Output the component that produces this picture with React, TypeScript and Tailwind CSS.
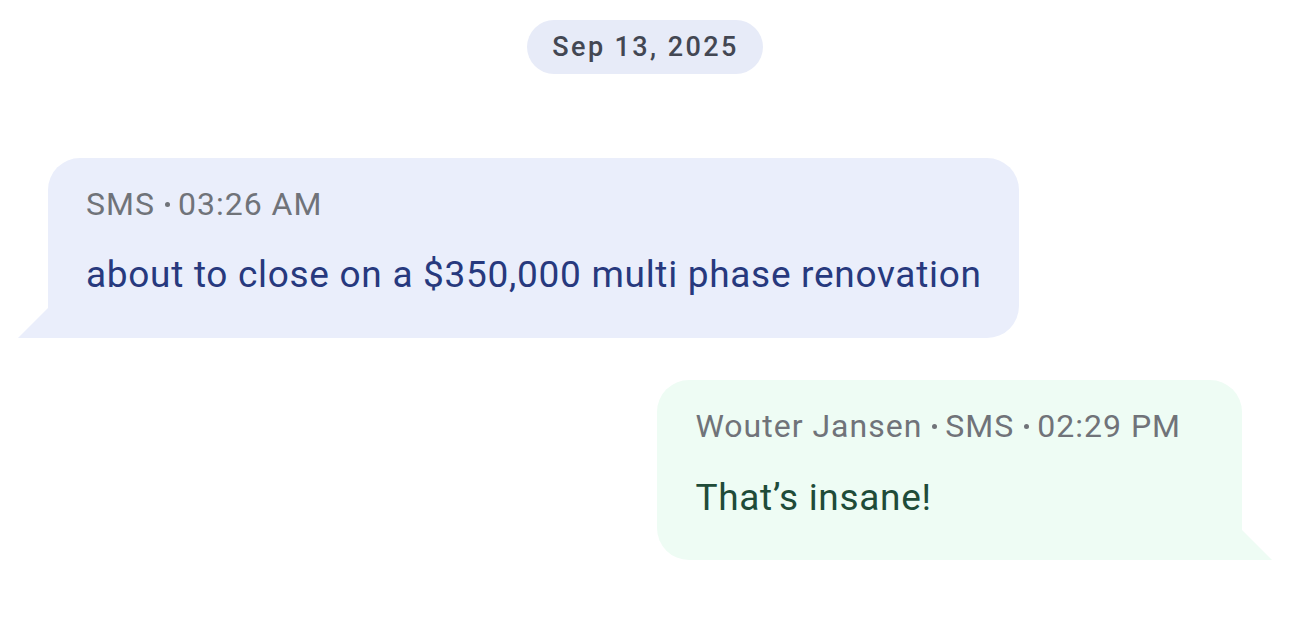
import React from "react";

type Msg = {
  side: "in" | "out";
  meta: string[];
  text: string;
};

const messages: Msg[] = [
  { side: "in", meta: ["SMS", "03:26 AM"], text: "about to close on a $350,000 multi phase renovation" },
  { side: "out", meta: ["Wouter Jansen", "SMS", "02:29 PM"], text: "That\u2019s insane!" },
];

function Meta({ parts }: { parts: string[] }) {
  return (
    <div className="flex items-center text-[32px] leading-[38px] text-[#707379] tracking-[1px]">
      {parts.map((p, i) => (
        <React.Fragment key={i}>
          {i > 0 && <span className="ml-[10px] mr-[8px] inline-block w-[5px] h-[5px] rounded-full bg-[#707379]" />}
          <span>{p}</span>
        </React.Fragment>
      ))}
    </div>
  );
}

function Bubble({ msg }: { msg: Msg }) {
  const incoming = msg.side === "in";
  return (
    <div
      className={
        incoming
          ? "relative self-start ml-[48px] h-[180px] flex flex-col pt-[27px] pl-[38px] pr-[37px] rounded-[32px] rounded-bl-none bg-[#eaeefb]"
          : "relative self-end mr-[48px] h-[180px] flex flex-col pt-[27px] pl-[38px] pr-[61px] rounded-[32px] rounded-br-none bg-[#eefcf4]"
      }
    >
      <Meta parts={msg.meta} />
      <p
        className={
          incoming
            ? "mt-[30px] text-[37px] leading-[44px] text-[#27397e] tracking-[0.7px]"
            : "mt-[31px] text-[37px] leading-[44px] text-[#204b38] tracking-[0.7px]"
        }
      >
        {msg.text}
      </p>
      {/* tail */}
      {incoming ? (
        <svg className="absolute left-[-30px] bottom-0" width="30" height="30" viewBox="0 0 30 30">
          <polygon points="0,30 30,0 30,30" fill="#eaeefb" />
        </svg>
      ) : (
        <svg className="absolute right-[-30px] bottom-0" width="30" height="30" viewBox="0 0 30 30">
          <polygon points="0,0 30,30 0,30" fill="#eefcf4" />
        </svg>
      )}
    </div>
  );
}

export default function App() {
  return (
    <div className="w-full h-[636px] bg-white flex flex-col" style={{ fontFamily: "Roboto, 'Noto Sans', sans-serif" }}>
      <div className="self-center mt-[20px] h-[54px] pl-[25px] pr-[24px] flex items-center rounded-full bg-[#e7ebf8] text-[27px] font-medium tracking-[2.4px] text-[#434753]">
        Sep 13, 2025
      </div>
      <div className="mt-[84px] flex flex-col gap-[42px]">
        {messages.map((m, i) => (
          <Bubble key={i} msg={m} />
        ))}
      </div>
    </div>
  );
}
